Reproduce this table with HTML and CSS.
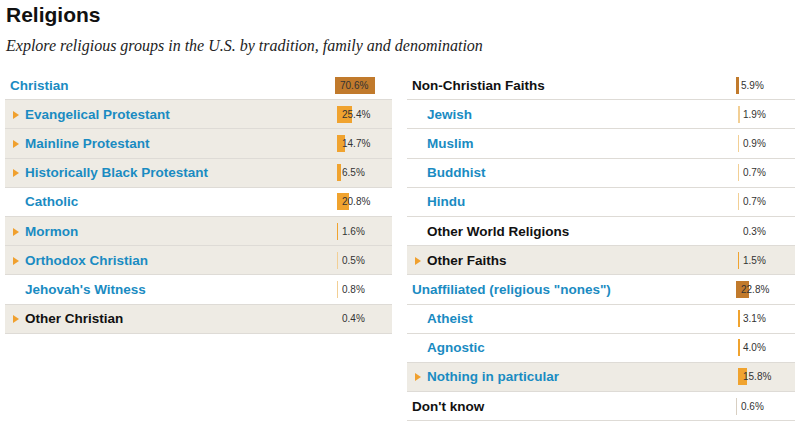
FILE: index.html
```html
<!DOCTYPE html>
<html lang="en">
<head>
   <meta charset="utf-8">
   <title>Religions</title>
   <link rel="stylesheet" href="styles.css">
</head>
<body>
   <div class="page">
      <h1 class="title">Religions</h1>
      <p class="intro">Explore religious groups in the U.S. by tradition, family and denomination</p>

      <div class="columns">
         <!-- left column: Christian traditions -->
         <div class="col left">
            <div class="row top">
               <span class="label link">Christian</span>
               <span class="value"><span class="bar dark" style="width: 40px"></span><span class="pct">70.6%</span></span>
            </div>
            <div class="row child open">
               <span class="label link">Evangelical Protestant</span>
               <span class="value"><span class="bar" style="width: 14.5px"></span><span class="pct">25.4%</span></span>
            </div>
            <div class="row child open">
               <span class="label link">Mainline Protestant</span>
               <span class="value"><span class="bar" style="width: 8.4px"></span><span class="pct">14.7%</span></span>
            </div>
            <div class="row child open">
               <span class="label link">Historically Black Protestant</span>
               <span class="value"><span class="bar" style="width: 3.7px"></span><span class="pct">6.5%</span></span>
            </div>
            <div class="row child">
               <span class="label link">Catholic</span>
               <span class="value"><span class="bar" style="width: 11.9px"></span><span class="pct">20.8%</span></span>
            </div>
            <div class="row child open">
               <span class="label link">Mormon</span>
               <span class="value"><span class="bar" style="width: 1px"></span><span class="pct">1.6%</span></span>
            </div>
            <div class="row child open">
               <span class="label link">Orthodox Christian</span>
               <span class="value"><span class="bar faint" style="width: 1px"></span><span class="pct">0.5%</span></span>
            </div>
            <div class="row child">
               <span class="label link">Jehovah's Witness</span>
               <span class="value"><span class="bar faint" style="width: 1px"></span><span class="pct">0.8%</span></span>
            </div>
            <div class="row child open">
               <span class="label">Other Christian</span>
               <span class="value"><span class="pct">0.4%</span></span>
            </div>
         </div>

         <!-- right column: other faiths and unaffiliated -->
         <div class="col right">
            <div class="row top">
               <span class="label">Non-Christian Faiths</span>
               <span class="value"><span class="bar dark" style="width: 3.4px"></span><span class="pct">5.9%</span></span>
            </div>
            <div class="row child">
               <span class="label link">Jewish</span>
               <span class="value"><span class="bar faint" style="width: 1.5px"></span><span class="pct">1.9%</span></span>
            </div>
            <div class="row child">
               <span class="label link">Muslim</span>
               <span class="value"><span class="bar faint" style="width: 1px"></span><span class="pct">0.9%</span></span>
            </div>
            <div class="row child">
               <span class="label link">Buddhist</span>
               <span class="value"><span class="bar faint" style="width: 1px"></span><span class="pct">0.7%</span></span>
            </div>
            <div class="row child">
               <span class="label link">Hindu</span>
               <span class="value"><span class="bar faint" style="width: 1px"></span><span class="pct">0.7%</span></span>
            </div>
            <div class="row child">
               <span class="label">Other World Religions</span>
               <span class="value"><span class="pct">0.3%</span></span>
            </div>
            <div class="row child open">
               <span class="label">Other Faiths</span>
               <span class="value"><span class="bar" style="width: 1px"></span><span class="pct">1.5%</span></span>
            </div>
            <div class="row top">
               <span class="label link">Unaffiliated (religious "nones")</span>
               <span class="value"><span class="bar dark" style="width: 13px"></span><span class="pct">22.8%</span></span>
            </div>
            <div class="row child">
               <span class="label link">Atheist</span>
               <span class="value"><span class="bar" style="width: 1.8px"></span><span class="pct">3.1%</span></span>
            </div>
            <div class="row child">
               <span class="label link">Agnostic</span>
               <span class="value"><span class="bar" style="width: 2.3px"></span><span class="pct">4.0%</span></span>
            </div>
            <div class="row child open">
               <span class="label link">Nothing in particular</span>
               <span class="value"><span class="bar" style="width: 9px"></span><span class="pct">15.8%</span></span>
            </div>
            <div class="row top">
               <span class="label">Don't know</span>
               <span class="value"><span class="bar grey" style="width: 1px"></span><span class="pct">0.6%</span></span>
            </div>
         </div>
      </div>
   </div>
</body>
</html>
```

FILE: styles.css
```css
/* page frame */
body {
   margin: 0;
   background-color: white;
   color: #111;
   font-family: "Liberation Sans", Arial, sans-serif;
}
.page {
   padding: 3px 4px 0 5px;
}
.title {
   margin: 0 0 0 1px;
   font-size: 21px;
   line-height: 24px;
   font-weight: bold;
}
.intro {
   margin: 10px 0 0 1px;
   font-family: "Liberation Serif", "Times New Roman", serif;
   font-style: italic;
   font-size: 16px;
   line-height: 18px;
   color: #222;
}

/* two lists side by side */
.columns {
   display: grid;
   grid-template-columns: 387px 388px;
   column-gap: 15px;
   margin-top: 16px;
}
.row {
   display: grid;
   grid-template-columns: 1fr 57px;
   align-items: center;
   height: 28.2px;
   border-bottom: 1px solid #dedbd6;
}
.col.right .row {
   grid-template-columns: 1fr 59px;
}
.row .label {
   font-size: 13.5px;
   font-weight: bold;
   padding-left: 5px;
   white-space: nowrap;
}
.row.child .label {
   padding-left: 20px;
}
.row.open {
   background-color: #eeebe4;
}
.row.open .label {
   position: relative;
}
.row.open .label::before {
   content: "";
   position: absolute;
   left: 8px;
   top: 4px;
   border-left: 6px solid #f0a02e;
   border-top: 4px solid transparent;
   border-bottom: 4px solid transparent;
}
.label.link {
   color: #1a8bc2;
}

/* percentage bars */
.value {
   display: grid;
   align-items: center;
   height: 17px;
}
.row.child .value {
   padding-left: 2px;
}
.value .bar,
.value .pct {
   grid-area: 1 / 1;
}
.bar {
   height: 17px;
   background-color: #f0a32f;
}
.bar.dark {
   background-color: #c17a2c;
}
.bar.faint {
   background-color: #f2cf95;
}
.bar.grey {
   background-color: #d8cfc2;
}
.pct {
   padding-left: 5px;
   font-size: 10px;
   color: #333;
}
```
